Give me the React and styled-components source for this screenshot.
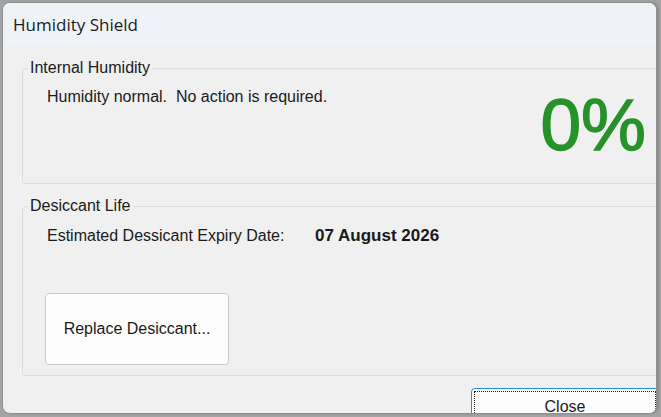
import React from "react";
import styled, { createGlobalStyle } from "styled-components";

const GlobalStyle = createGlobalStyle`
  html, body {
    margin: 0;
    padding: 0;
    background: #a3a3a3;
    width: 661px;
    height: 417px;
    overflow: hidden;
  }
  body {
    font-family: "Liberation Sans", Arial, sans-serif;
    color: #1a1a1a;
  }
`;

const Window = styled.div`
  margin: 2px 0 0 2px;
  width: 655px;
  height: 412px;
  box-sizing: border-box;
  border: 1px solid #8e8e8e;
  border-radius: 8px;
  background: #f0f0f0;
  overflow: hidden;
  display: flex;
  flex-direction: column;
  box-shadow: 2px 0 2px rgba(0, 0, 0, 0.15);
`;

const TitleBar = styled.div`
  height: 42px;
  flex: none;
  display: flex;
  align-items: center;
  padding-left: 10px;
  background: #eff3f8;
  font-family: "Open Sans", "Noto Sans", sans-serif;
  font-size: 17px;
  color: #1b1b1b;
`;

const Body = styled.div`
  flex: 1;
  display: flex;
  flex-direction: column;
  padding: 14px 0 0 19px;
  margin-right: -12px;
`;

const Group = styled.fieldset`
  margin: 0 0 ${(p) => p.$gap || 0}px 0;
  padding: 0 0 ${(p) => p.$bottom}px 5px;
  border: 1px solid #d8dce2;
  border-radius: 4px;
  min-width: 0;
`;

const Legend = styled.legend`
  padding: 0 2px;
  font-size: 16px;
  line-height: 18px;
  color: #1a1a1a;
`;

const GroupContent = styled.div`
  display: flex;
  align-items: flex-start;
  justify-content: space-between;
  padding: 11px 21px 0 19px;
`;

const Message = styled.div`
  font-size: 16px;
  line-height: 18px;
`;

const Percent = styled.div`
  font-size: 73px;
  line-height: 1;
  color: #27922a;
  -webkit-text-stroke: 1.4px #27922a;
  margin-top: 0;
`;

const Column = styled.div`
  display: flex;
  flex-direction: column;
  align-items: flex-start;
  padding: 12px 0 0 19px;
`;

const Row = styled.div`
  display: flex;
  font-size: 16px;
  line-height: 18px;
`;

const FieldLabel = styled.span`
  width: 268px;
`;

const FieldValue = styled.span`
  font-weight: 700;
  font-size: 17px;
`;

const Button = styled.button`
  font-family: "Liberation Sans", Arial, sans-serif;
  font-size: 16px;
  color: #1a1a1a;
  background: #fdfdfd;
  border: 1px solid #c9c9c9;
  border-radius: 4px;
  width: 184px;
  height: 72px;
  margin: 48px 0 0 -2px;
  padding: 0;
`;

const Footer = styled.div`
  display: flex;
  justify-content: flex-end;
  padding-top: 12px;
  margin-right: 9px;
`;

const DefaultButton = styled.button`
  position: relative;
  font-family: "Liberation Sans", Arial, sans-serif;
  font-size: 16px;
  color: #1a1a1a;
  background: #fdfdfd;
  border: 1px solid #2f8ccf;
  border-radius: 4px;
  width: 188px;
  height: 38px;
  padding: 0;
  flex: none;
  &::after {
    content: "";
    position: absolute;
    inset: 2px;
    border: 1px dotted #222;
  }
`;

export default function App() {
  return (
    <>
      <GlobalStyle />
      <Window>
        <TitleBar>Humidity Shield</TitleBar>
        <Body>
          <Group $bottom={22} $gap={13}>
            <Legend>Internal Humidity</Legend>
            <GroupContent>
              <Message>Humidity normal.&nbsp; No action is required.</Message>
              <Percent>0%</Percent>
            </GroupContent>
          </Group>
          <Group $bottom={10}>
            <Legend>Desiccant Life</Legend>
            <Column>
              <Row>
                <FieldLabel>Estimated Dessicant Expiry Date:</FieldLabel>
                <FieldValue>07 August 2026</FieldValue>
              </Row>
              <Button>Replace Desiccant...</Button>
            </Column>
          </Group>
          <Footer>
            <DefaultButton>Close</DefaultButton>
          </Footer>
        </Body>
      </Window>
    </>
  );
}
